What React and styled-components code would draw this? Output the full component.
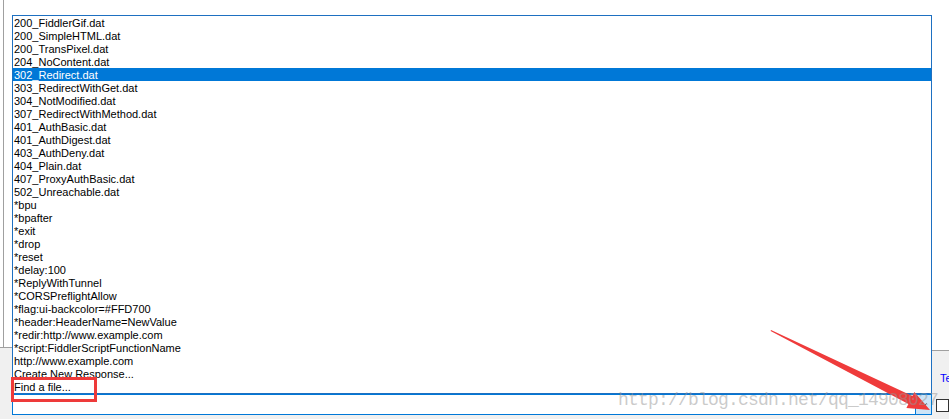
import React from "react";
import styled, { createGlobalStyle } from "styled-components";

const Global = createGlobalStyle`
  html, body { margin: 0; padding: 0; background: #f0f0f0; overflow: hidden; }
  #root { width: 949px; height: 419px; }
`;

const Page = styled.div`
  position: relative;
  width: 949px;
  height: 419px;
  display: flex;
  font-family: "Liberation Sans", Arial, sans-serif;
  font-size: 11px;
  color: #000;
  overflow: hidden;
`;

const LeftPane = styled.div`
  width: 932px;
  display: flex;
  flex-direction: column;
`;

const TopArea = styled.div`
  height: 347px;
  background: #fff;
  border-bottom: 1px solid #a0a0a0;
  display: flex;
`;

const InnerPanel = styled.div`
  margin-left: 3px;
  flex: 1;
  border-left: 1px solid #a0a0a0;
`;

const BottomArea = styled.div`
  flex: 1;
  background: #f0f0f0;
  padding: 46px 0 0 12px;
`;

const Combo = styled.div`
  width: 920px;
  height: 21px;
  box-sizing: border-box;
  border: 1px solid #0078d7;
  background: #fff;
  display: flex;
  justify-content: flex-end;
`;

const ComboButton = styled.div`
  width: 16px;
  box-sizing: border-box;
  border-left: 1px solid #0078d7;
  background: #cce4f7;
  display: flex;
  align-items: center;
  justify-content: center;
`;

const RightPane = styled.div`
  flex: 1;
  display: flex;
  flex-direction: column;
  overflow: hidden;
`;

const RightTop = styled.div`
  height: 350px;
  background: #fff;
  border-bottom: 1px solid #a0a0a0;
`;

const RightBottom = styled.div`
  flex: 1;
  background: #f0f0f0;
  padding-top: 21px;
  white-space: nowrap;
`;

const LinkText = styled.div`
  padding-left: 8px;
  color: #0000ff;
  line-height: 13px;
`;

const Check = styled.div`
  margin: 14px 0 0 4px;
  width: 13px;
  height: 13px;
  box-sizing: border-box;
  border: 1px solid #333;
  background: #fff;
`;

const DropList = styled.div`
  position: absolute;
  left: 12px;
  top: 15px;
  width: 920px;
  box-sizing: border-box;
  border: 1px solid #1e70c1;
  background: #fff;
  display: flex;
  flex-direction: column;
`;

const Item = styled.div`
  height: 13px;
  box-sizing: border-box;
  padding: 1px 0 0 1px;
  line-height: 12px;
  white-space: nowrap;
  background: ${(p) => (p.$selected ? "#0078d7" : "transparent")};
  color: ${(p) => (p.$selected ? "#fff" : "#000")};
`;

const Highlight = styled.div`
  position: absolute;
  left: 11px;
  top: 377px;
  width: 86px;
  height: 25px;
  box-sizing: border-box;
  border: 3px solid #ee3a3a;
`;

const Overlay = styled.svg`
  position: absolute;
  left: 0;
  top: 0;
  pointer-events: none;
`;

const Watermark = styled.div`
  position: absolute;
  left: 618px;
  top: 390px;
  font-family: "Liberation Mono", "Courier New", monospace;
  font-size: 18px;
  letter-spacing: -0.8px;
  line-height: 20px;
  color: rgba(150, 150, 150, 0.5);
  white-space: nowrap;
  pointer-events: none;
`;

const items = [
  "200_FiddlerGif.dat",
  "200_SimpleHTML.dat",
  "200_TransPixel.dat",
  "204_NoContent.dat",
  "302_Redirect.dat",
  "303_RedirectWithGet.dat",
  "304_NotModified.dat",
  "307_RedirectWithMethod.dat",
  "401_AuthBasic.dat",
  "401_AuthDigest.dat",
  "403_AuthDeny.dat",
  "404_Plain.dat",
  "407_ProxyAuthBasic.dat",
  "502_Unreachable.dat",
  "*bpu",
  "*bpafter",
  "*exit",
  "*drop",
  "*reset",
  "*delay:100",
  "*ReplyWithTunnel",
  "*CORSPreflightAllow",
  "*flag:ui-backcolor=#FFD700",
  "*header:HeaderName=NewValue",
  "*redir:http://www.example.com",
  "*script:FiddlerScriptFunctionName",
  "http://www.example.com",
  "Create New Response...",
  "Find a file...",
];

export default function App() {
  return (
    <>
      <Global />
      <Page>
        <LeftPane>
          <TopArea>
            <InnerPanel />
          </TopArea>
          <BottomArea>
            <Combo>
              <ComboButton>
                <svg width="7" height="4" viewBox="0 0 7 4">
                  <path d="M0.5 0.5 L3.5 3.5 L6.5 0.5" fill="none" stroke="#333" strokeWidth="1" />
                </svg>
              </ComboButton>
            </Combo>
          </BottomArea>
        </LeftPane>
        <RightPane>
          <RightTop />
          <RightBottom>
            <LinkText>Te</LinkText>
            <Check />
          </RightBottom>
        </RightPane>

        <DropList>
          {items.map((t, i) => (
            <Item key={i} $selected={i === 4}>
              {t}
            </Item>
          ))}
        </DropList>

        <Highlight />

        <Overlay width="949" height="419" viewBox="0 0 949 419">
          <polygon
            points="771,330 912.4,396.1 914.4,392.1 930,410 906.4,408.1 908.4,404.1 770.6,331"
            fill="#ef3b3b"
          />
        </Overlay>

        <Watermark>http://blog.csdn.net/qq_14908027</Watermark>
      </Page>
    </>
  );
}
